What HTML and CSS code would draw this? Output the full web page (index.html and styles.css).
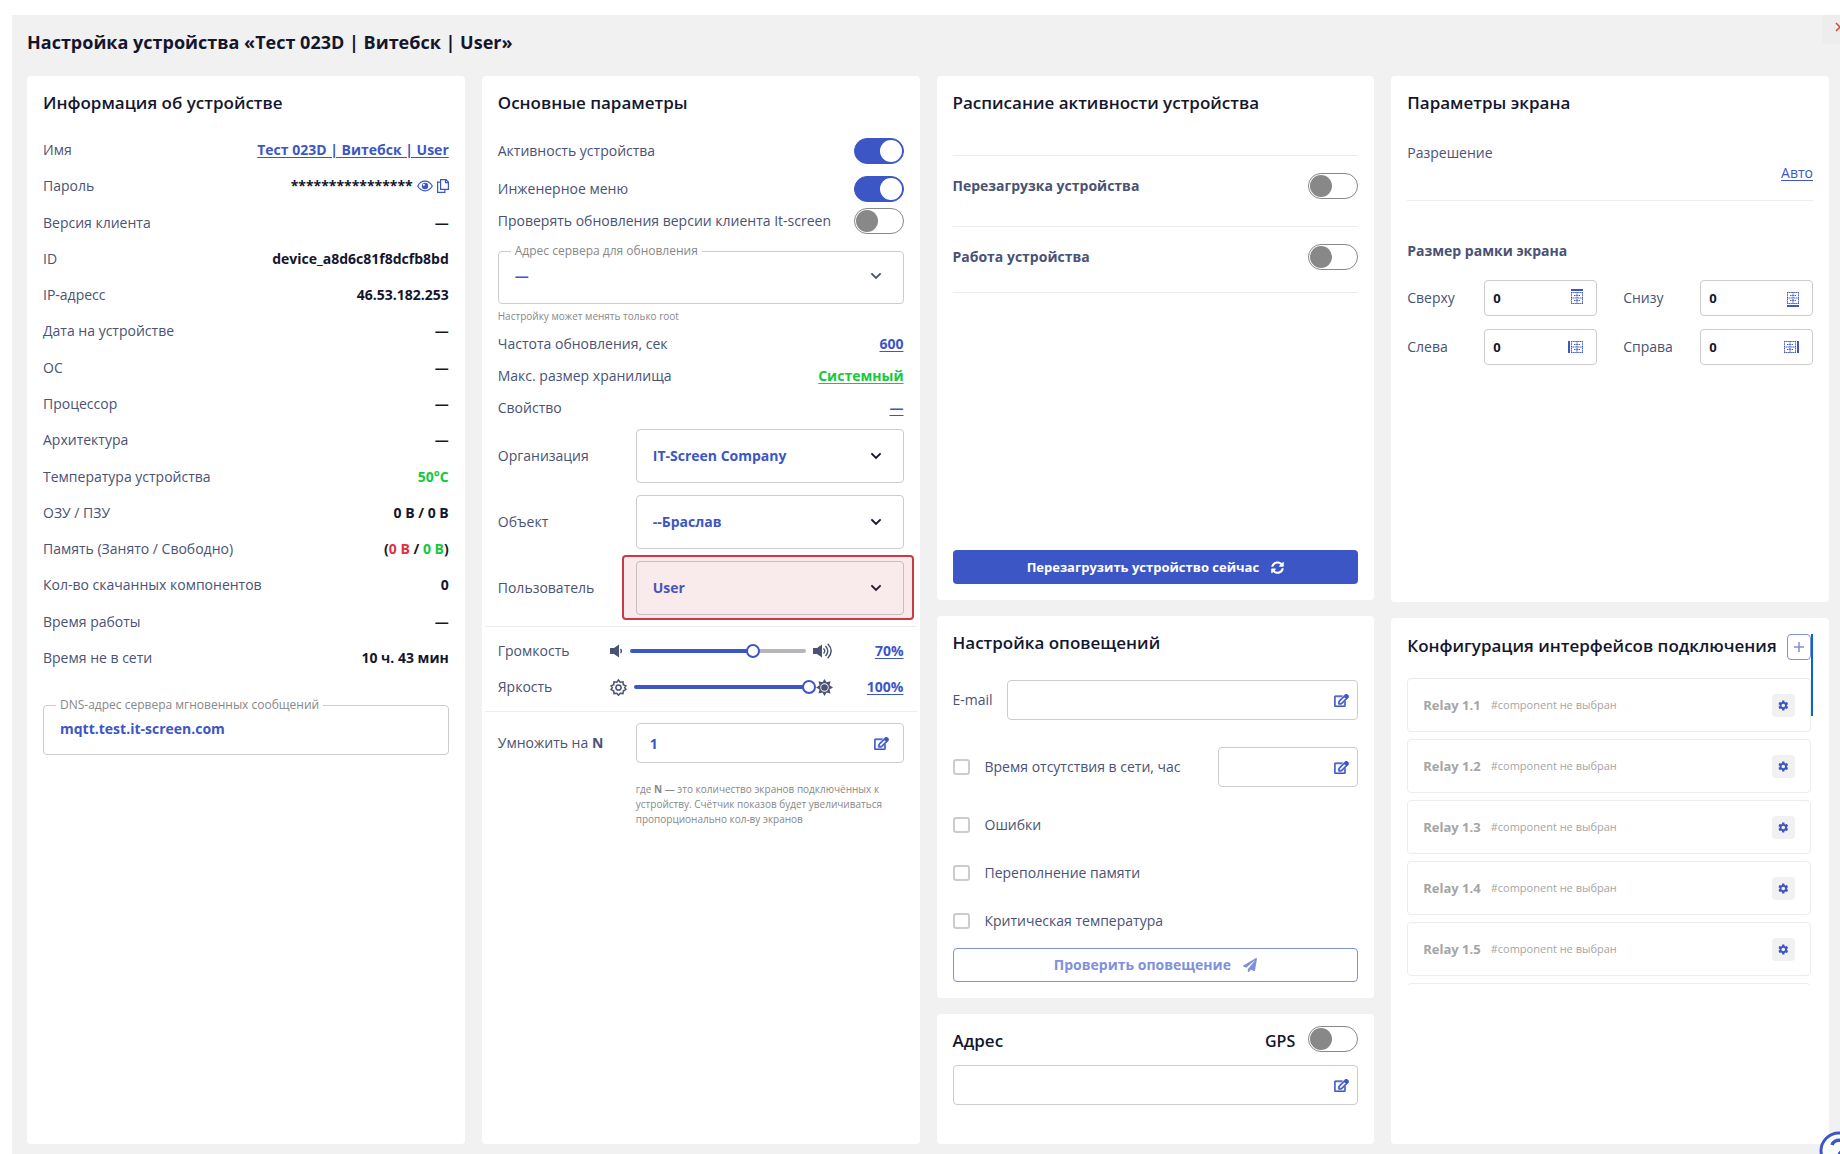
FILE: index.html
```html
<!DOCTYPE html>
<html lang="ru">
<head>
<meta charset="utf-8">
<title>Настройка устройства</title>
<link rel="stylesheet" href="styles.css">
</head>
<body>
<svg class="sprite" aria-hidden="true">
  <symbol id="i-edit" viewBox="0 0 576 512"><path stroke="currentColor" stroke-width="22" d="M402 320l32-32c5-5 14-1 14 6v170c0 26-22 48-48 48H48c-27 0-48-22-48-48V112c0-27 21-48 48-48h274c7 0 11 9 6 14l-32 32c-2 1-4 2-6 2H48v352h352V326c0-2 1-4 2-6zM558 143L296 406l-91 10c-26 3-48-19-45-45l10-91L433 18c23-23 60-23 83 0l42 42c23 23 23 60 0 83zM460 174l-58-58-186 186-8 66 66-8z"/></symbol>
  <symbol id="i-chev" viewBox="0 0 12 12"><path d="M2 4l4 4 4-4" fill="none" stroke="currentColor" stroke-width="1.8" stroke-linecap="square"/></symbol>
  <symbol id="i-gear" viewBox="0 0 24 24"><path fill-rule="evenodd" d="M19.4 13c.1-.3.1-.7.1-1s0-.7-.1-1l2.4-1.800c.2-.2.3-.5.1-.7l-2.200-4c-.1-.3-.4-.3-.6-.2L16.200 5.400c-.6-.4-1.200-.8-1.900-1L13.900 1.400c0-.2-.2-.4-.5-.4h-3.800c-.3 0-.5.2-.5.400l-.4 3c-.7.300-1.300.6-1.900 1L3.900 4.300c-.2-.1-.5 0-.6.2l-2.200 4c-.1.200-.1.500.1.700L3.700 11c-.1.300-.1.700-.1 1s0 .7.100 1l-2.500 1.800c-.2.200-.2.500-.1.700l2.200 4c.1.300.4.300.6.200l2.900-1.100c.6.400 1.200.8 1.900 1l.4 3c0 .2.200.4.500.4h3.800c.3 0 .5-.2.5-.4l.4-3c.7-.3 1.300-.6 1.900-1l2.900 1.100c.2.100.5 0 .6-.2l2.200-4c.1-.2.1-.5-.1-.7zM11.500 16a4 4 0 110-8 4 4 0 010 8z"/></symbol>
  <symbol id="i-grid" viewBox="0 0 12 12"><path d="M0 .5h12M0 6h12M0 11.500h12" fill="none" stroke="currentColor" stroke-dasharray="1.500 .6"/><path d="M.5 0v12M6 0v12M11.500 0v12M3 3.500h6M3 8.500h6" fill="none" stroke="currentColor" stroke-dasharray="1.500 .8"/></symbol>
</svg>
<main class="panel">
  <button class="close" type="button" aria-label="Закрыть"><svg width="10" height="10" viewBox="0 0 10 10"><path d="M1 1l8 8M9 1L1 9" fill="none" stroke="currentColor" stroke-width="1.500"/></svg></button>
  <h1 class="title">Настройка устройства «Тест 023D | Витебск | User»</h1>
  <div class="columns">

    <div class="column">
      <section class="card">
        <h2 class="heading">Информация об устройстве</h2>
        <dl class="info">
          <div class="pair"><dt>Имя</dt><dd><a class="link" href="#">Тест 023D | Витебск | User</a></dd></div>
          <div class="pair"><dt>Пароль</dt><dd class="secret">****************
            <svg class="blue" width="16" height="12" viewBox="0 0 16 12"><path d="M.7 6C2.500 2.700 5 1.200 8 1.200S13.500 2.700 15.300 6C13.500 9.300 11 10.800 8 10.800S2.500 9.300.7 6z" fill="none" stroke="currentColor" stroke-width="1.200"/><circle cx="8" cy="6" r="3.200"/><circle cx="6.800" cy="4.800" r="1.100" fill="#fff"/></svg>
            <svg class="blue" width="12" height="14" viewBox="0 0 12 14"><path d="M3.600.6H9L11.400 3v7.400H3.600zM8.500.6v3h2.900M3.600 3.100H.6v10.300h7.300v-3" fill="none" stroke="currentColor" stroke-width="1.200"/></svg></dd></div>
          <div class="pair"><dt>Версия клиента</dt><dd>—</dd></div>
          <div class="pair"><dt>ID</dt><dd>device_a8d6c81f8dcfb8bd</dd></div>
          <div class="pair"><dt>IP-адресс</dt><dd>46.53.182.253</dd></div>
          <div class="pair"><dt>Дата на устройстве</dt><dd>—</dd></div>
          <div class="pair"><dt>ОС</dt><dd>—</dd></div>
          <div class="pair"><dt>Процессор</dt><dd>—</dd></div>
          <div class="pair"><dt>Архитектура</dt><dd>—</dd></div>
          <div class="pair"><dt>Температура устройства</dt><dd class="green">50°C</dd></div>
          <div class="pair"><dt>ОЗУ / ПЗУ</dt><dd>0 B / 0 B</dd></div>
          <div class="pair"><dt>Память (Занято / Свободно)</dt><dd>(<span class="red">0 B</span> / <span class="green">0 B</span>)</dd></div>
          <div class="pair"><dt>Кол-во скачанных компонентов</dt><dd>0</dd></div>
          <div class="pair"><dt>Время работы</dt><dd>—</dd></div>
          <div class="pair"><dt>Время не в сети</dt><dd>10 ч. 43 мин</dd></div>
        </dl>
        <fieldset class="outlined dns">
          <legend>DNS-адрес сервера мгновенных сообщений</legend>
          <input class="bare" type="text" value="mqtt.test.it-screen.com" aria-label="DNS-адрес сервера мгновенных сообщений">
        </fieldset>
      </section>
    </div>

    <div class="column">
      <section class="card">
        <h2 class="heading">Основные параметры</h2>
        <div class="switches">
          <label class="pair"><span>Активность устройства</span><input class="toggle" type="checkbox" checked></label>
          <label class="pair"><span>Инженерное меню</span><input class="toggle" type="checkbox" checked></label>
        </div>
        <label class="pair updates"><span>Проверять обновления версии клиента It-screen</span><input class="toggle" type="checkbox"></label>
        <fieldset class="outlined server">
          <legend>Адрес сервера для обновления</legend>
          <div class="pick bareless"><select aria-label="Адрес сервера для обновления"><option>—</option></select><svg class="chev soft" width="12" height="12"><use href="#i-chev"/></svg></div>
        </fieldset>
        <p class="hint">Настройку может менять только root</p>
        <dl class="facts">
          <div class="pair"><dt>Частота обновления, сек</dt><dd><a class="link" href="#">600</a></dd></div>
          <div class="pair"><dt>Макс. размер хранилища</dt><dd><a class="link green" href="#">Системный</a></dd></div>
          <div class="pair"><dt>Свойство</dt><dd><a class="link" href="#">—</a></dd></div>
        </dl>
        <div class="form">
          <label class="label" for="org">Организация</label>
          <div class="pick boxed"><select id="org"><option>IT-Screen Company</option></select><svg class="chev" width="12" height="12"><use href="#i-chev"/></svg></div>
          <label class="label" for="obj">Объект</label>
          <div class="pick boxed"><select id="obj"><option>--Браслав</option></select><svg class="chev" width="12" height="12"><use href="#i-chev"/></svg></div>
          <label class="label" for="usr">Пользователь</label>
          <div class="pick boxed marked"><select id="usr"><option>User</option></select><svg class="chev" width="12" height="12"><use href="#i-chev"/></svg></div>
        </div>
        <div class="levels">
          <div class="level">
            <label class="label" for="vol">Громкость</label>
            <svg width="13" height="14" viewBox="0 0 13 14"><path d="M0 4h4l5-3.500v13L4 10H0z"/><path d="M10.500 5q2 2 0 4" fill="none" stroke="currentColor" stroke-width="1.400"/></svg>
            <div class="slider" style="--value:70%"><input id="vol" type="range" value="70"></div>
            <svg width="20" height="16" viewBox="0 0 20 16"><path d="M0 5h4l5-3.500v13L4 11H0z"/><path d="M10.500 5.500q2.500 2.500 0 5M12.500 3q4.500 5 0 10M14.700.8q7 7.200 0 14.400" fill="none" stroke="currentColor" stroke-width="1.400"/></svg>
            <a class="link" href="#">70%</a>
          </div>
          <div class="level">
            <label class="label" for="bri">Яркость</label>
            <svg width="17" height="17" viewBox="0 0 17 17"><path d="M8.500 1l1.700 2.300 2.800-.5.300 2.900 2.600 1.100L14.700 8.500l1.200 2-2.600 1.500-.3 2.600-2.800-.4-1.700 2-1.700-2-2.800.4-.3-2.600-2.600-1.500 1.200-2-1.200-1.700 2.600-1.100.3-2.900 2.800.5z" fill="none" stroke="currentColor" stroke-width="1.500"/><circle cx="8.500" cy="8.500" r="2.600" fill="none" stroke="currentColor" stroke-width="1.500"/></svg>
            <div class="slider" style="--value:100%"><input id="bri" type="range" value="100"></div>
            <svg width="17" height="17" viewBox="0 0 17 17"><path fill-rule="evenodd" d="M8.500 0l2 3.300 4-1-1 4L17 8.500l-3.500 2 1 4-4-.9-2 3.400-2-3.400-4 .9 1-4L0 8.500l3.500-2.200-1-4 4 1zM8.500 4.300a4.200 4.200 0 100 8.400 4.200 4.200 0 000-8.400z"/><circle cx="8.500" cy="8.500" r="3.300"/></svg>
            <a class="link" href="#">100%</a>
          </div>
        </div>
        <div class="form multiply">
          <label class="label" for="mul">Умножить на <b>N</b></label>
          <div class="field"><input id="mul" type="text" value="1"><svg class="edit" width="15" height="13"><use href="#i-edit"/></svg></div>
          <p class="hint note">где <b>N</b> — это количество экранов подключённых к устройству. Счётчик показов будет увеличиваться пропорционально кол-ву экранов</p>
        </div>
      </section>
    </div>

    <div class="column">
      <section class="card schedule">
        <h2 class="heading">Расписание активности устройства</h2>
        <div class="plan">
          <label class="pair strong"><span>Перезагрузка устройства</span><input class="toggle" type="checkbox"></label>
          <label class="pair strong"><span>Работа устройства</span><input class="toggle" type="checkbox"></label>
        </div>
        <button class="button solid" type="button">Перезагрузить устройство сейчас
          <svg width="13" height="13" viewBox="0 0 512 512"><path d="M371 142c-32-31-72-47-115-47-78 0-145 53-164 127-1 5-6 9-11 9H24c-8 0-14-7-12-14C33 103 134 16 256 16c66 0 127 26 171 69l36-36c15-15 41-4 41 17v134c0 13-11 24-24 24H346c-21 0-32-26-17-41zM32 296h134c21 0 32 26 17 41l-42 41c32 31 72 47 115 47 78 0 145-53 164-127 1-5 6-9 11-9h57c8 0 14 7 12 14-21 114-122 201-244 201-66 0-127-26-171-69l-36 36c-15 15-41 4-41-17V320c0-13 11-24 24-24z"/></svg></button>
      </section>
      <section class="card alerts">
        <h2 class="heading">Настройка оповещений</h2>
        <div class="mail"><label class="label" for="mail">E-mail</label>
          <div class="field"><input id="mail" type="text"><svg class="edit" width="15" height="13"><use href="#i-edit"/></svg></div></div>
        <div class="absence"><label class="check"><input class="tick" type="checkbox">Время отсутствия в сети, час</label>
          <div class="field hours"><input type="text" aria-label="Время отсутствия в сети, час"><svg class="edit" width="15" height="13"><use href="#i-edit"/></svg></div></div>
        <div class="checks">
          <label class="check"><input class="tick" type="checkbox">Ошибки</label>
          <label class="check"><input class="tick" type="checkbox">Переполнение памяти</label>
          <label class="check"><input class="tick" type="checkbox">Критическая температура</label>
        </div>
        <button class="button ghost" type="button">Проверить оповещение
          <svg width="14" height="14" viewBox="0 0 512 512"><path d="M476 3L12 271c-18 10-16 35 2 43l106 44L408 105c6-5 13 3 9 9L176 407v81c0 23 28 33 42 15l64-77 124 52c15 6 31-3 33-19l72-432c3-20-18-34-35-24z"/></svg></button>
      </section>
      <section class="card address">
        <div class="addresshead"><h2 class="heading">Адрес</h2><label class="gps">GPS<input class="toggle" type="checkbox"></label></div>
        <div class="field"><input type="text" aria-label="Адрес"><svg class="edit" width="15" height="13"><use href="#i-edit"/></svg></div>
      </section>
    </div>

    <div class="column">
      <section class="card half">
        <h2 class="heading">Параметры экрана</h2>
        <div class="resolution"><span>Разрешение</span><a class="link plain" href="#">Авто</a></div>
        <h3 class="subheading">Размер рамки экрана</h3>
        <div class="frame">
          <label for="ft">Сверху</label><div class="side"><input id="ft" type="text" value="0"><svg class="edge" width="18" height="18" viewBox="0 0 18 18"><path d="M3 0h12v2H3z"/><use href="#i-grid" x="3" y="3" width="12" height="12"/></svg></div>
          <label class="second" for="fb">Снизу</label><div class="side"><input id="fb" type="text" value="0"><svg class="edge" width="18" height="18" viewBox="0 0 18 18"><path d="M3 16h12v2H3z"/><use href="#i-grid" x="3" y="3" width="12" height="12"/></svg></div>
          <label for="fl">Слева</label><div class="side"><input id="fl" type="text" value="0"><svg class="edge" width="18" height="18" viewBox="0 0 18 18"><path d="M0 3h2v12H0z"/><use href="#i-grid" x="3" y="3" width="12" height="12"/></svg></div>
          <label class="second" for="fr">Справа</label><div class="side"><input id="fr" type="text" value="0"><svg class="edge" width="18" height="18" viewBox="0 0 18 18"><path d="M13 3h2v12h-2z"/><use href="#i-grid" x="0" y="3" width="12" height="12"/></svg></div>
        </div>
      </section>
      <section class="card half">
        <div class="scroller">
          <div class="relayhead"><h2 class="heading">Конфигурация интерфейсов подключения</h2><button class="add" type="button" aria-label="Добавить"><svg width="12" height="12" viewBox="0 0 12 12"><path d="M6 1v10M1 6h10" fill="none" stroke="currentColor" stroke-width="1.500"/></svg></button></div>
          <ul class="relays">
            <li class="relay"><b>Relay 1.1</b><span>#component не выбран</span><button class="cog" type="button" aria-label="Настроить"><svg width="11" height="11"><use href="#i-gear"/></svg></button></li>
            <li class="relay"><b>Relay 1.2</b><span>#component не выбран</span><button class="cog" type="button" aria-label="Настроить"><svg width="11" height="11"><use href="#i-gear"/></svg></button></li>
            <li class="relay"><b>Relay 1.3</b><span>#component не выбран</span><button class="cog" type="button" aria-label="Настроить"><svg width="11" height="11"><use href="#i-gear"/></svg></button></li>
            <li class="relay"><b>Relay 1.4</b><span>#component не выбран</span><button class="cog" type="button" aria-label="Настроить"><svg width="11" height="11"><use href="#i-gear"/></svg></button></li>
            <li class="relay"><b>Relay 1.5</b><span>#component не выбран</span><button class="cog" type="button" aria-label="Настроить"><svg width="11" height="11"><use href="#i-gear"/></svg></button></li>
            <li class="relay"></li>
          </ul>
        </div>
      </section>
    </div>
  </div>
</main>
<button class="help" type="button" aria-label="Помощь"><svg width="40" height="40" viewBox="0 0 40 40"><circle cx="20" cy="20" r="18" fill="#fff" stroke="currentColor" stroke-width="3"/><path d="M13 14c2-7 14-6 14 1 0 5-7 5-7 10" fill="none" stroke="currentColor" stroke-width="3.500"/><circle cx="20" cy="30" r="2"/></svg></button>
</body>
</html>
```
FILE: styles.css
```css
* { box-sizing: border-box; }
:root {
  --blue: #3d56c6;
  --ink: #14162e;
  --label: #4a5275;
  --line: #ccc;
  --rule: #ececec;
  --grey: #888;
}
body {
  margin: 0;
  background: #fff;
  color: var(--label);
  font: 14px/20px "Open Sans", "Noto Sans", sans-serif;
  overflow: hidden;
}
h1, h2, h3, p, dl, dd, ul { margin: 0; padding: 0; }
svg { display: block; flex: none; fill: currentColor; }
button, input, select { font: inherit; color: inherit; margin: 0; }
button { padding: 0; border: 0; background: none; display: flex; align-items: center; justify-content: center; }
.sprite { position: absolute; width: 0; height: 0; }

.panel {
  position: relative;
  display: flex;
  flex-direction: column;
  min-height: calc(100vh - 15px);
  margin: 15px 0 0 12px;
  padding: 15px 11px 10px 15px;
  background: #f1f1f1;
}
.title { color: var(--ink); font-size: 18px; line-height: 24px; font-weight: 700; margin-bottom: 22px; }
.close { position: absolute; top: 0; right: -18px; width: 36px; height: 29px; background: #ededed; color: #d8432b; padding-bottom: 6px; }
.columns { flex: 1; display: grid; grid-template-columns: repeat(4, minmax(0, 1fr)); gap: 17px; }
.column { display: flex; flex-direction: column; gap: 16px; }
.card { background: #fff; border-radius: 4px; padding: 16px; }
.column > .card:only-child, .schedule, .half { flex: 1; }
.heading { color: var(--ink); font-size: 17px; line-height: 22px; font-weight: 600; padding-bottom: 2px; }
.subheading { font-size: 14px; line-height: 20px; font-weight: 700; }

.pair { display: flex; align-items: center; justify-content: space-between; }
dd { color: var(--ink); font-weight: 700; }
.link { color: var(--blue); font-weight: 700; text-decoration: underline; text-underline-offset: 2px; }
.link.plain { font-weight: 400; }
.green, .link.green { color: #14c93c; }
.red { color: #e2313f; }
.blue { color: var(--blue); }
.strong { font-weight: 700; }

.info { display: grid; grid-auto-rows: 1fr; min-height: 544px; margin-top: 16px; }
.secret { display: flex; align-items: center; gap: 4px; }

.outlined { border: 1px solid var(--line); border-radius: 4px; margin: 0; padding: 0 16px; min-width: 0; }
.outlined legend { font-size: 12px; line-height: 14px; color: var(--grey); padding: 0 4px; margin-left: -4px; }
.dns { margin-top: 22px; height: 57px; }
.bare { width: 100%; border: 0; padding: 0; height: 32px; background: none; color: var(--blue); font-weight: 700; }

.toggle {
  appearance: none; flex: none; width: 50px; height: 26px; border: 1px solid var(--grey); border-radius: 13px;
  padding: 1px; background: #fff; display: flex;
}
.toggle::before { content: ""; width: 22px; height: 22px; border-radius: 50%; background: var(--grey); }
.toggle:checked { background: var(--blue); border-color: var(--blue); justify-content: flex-end; }
.toggle:checked::before { background: #fff; }
.switches { display: grid; gap: 12px; margin-top: 22px; }
.updates { margin-top: 6px; }

.server { margin-top: 10px; height: 60px; }
.hint { font-size: 10px; line-height: 15px; color: var(--grey); }
.server + .hint { margin-top: 5px; }
.facts { display: grid; gap: 12px; margin-top: 10px; }
.pick { position: relative; display: flex; align-items: center; }
.pick select { appearance: none; width: 100%; height: 36px; border: 0; padding: 0; background: none; color: var(--blue); font-weight: 700; }
.pick.boxed select { height: 54px; border: 1px solid var(--line); border-radius: 4px; padding: 0 16px; }
.chev { position: absolute; right: 22px; color: var(--ink); pointer-events: none; }
.bareless .chev { right: 5px; }
.chev.soft { color: var(--label); }
.marked::after {
  content: ""; position: absolute; inset: -6px -10px -5px -14px; border: 2px solid #c93a45; border-radius: 4px;
  background: rgba(201, 58, 69, .1); pointer-events: none;
}
.form { display: grid; grid-template-columns: 138px 1fr; align-items: center; row-gap: 12px; margin-top: 11px; }
.levels { display: grid; gap: 16px; margin: 11px -13px 0; padding: 14px 13px; border: solid var(--rule); border-width: 1px 0; }
.level { display: flex; align-items: center; }
.level .label { width: 112px; }
.level .link { width: 71px; text-align: right; }
.slider { position: relative; flex: 1; min-width: 0; margin: 0 7px; display: flex; align-items: center; }
.slider::before {
  content: ""; position: absolute; left: 0; right: 0; height: 4px; border-radius: 2px;
  background: linear-gradient(to right, var(--blue) var(--value), #b4b6bb var(--value));
}
.slider input { appearance: none; position: relative; flex: 1; min-width: 0; height: 14px; margin: 0 -7px; background: none; }
.slider input::-webkit-slider-thumb { appearance: none; width: 14px; height: 14px; border: 2px solid var(--blue); border-radius: 50%; background: #fff; }
.multiply { row-gap: 19px; }
.note { grid-column: 2; }
.field { position: relative; display: flex; align-items: center; }
.field input { width: 100%; height: 40px; border: 1px solid var(--line); border-radius: 4px; padding: 0 40px 0 13px; background: #fff; color: var(--blue); font-weight: 700; }
.edit { position: absolute; right: 9px; color: var(--blue); }
.multiply .edit { right: 15px; }

.schedule { display: flex; flex-direction: column; }
.plan { margin-top: 39px; border-top: 1px solid var(--rule); }
.plan .pair { padding: 17px 0 27px; border-bottom: 1px solid var(--rule); }
.plan .pair + .pair { padding-bottom: 22px; }
.button { width: 100%; height: 34px; border-radius: 4px; gap: 12px; font-weight: 700; font-size: 13px; }
.solid { margin-top: auto; background: var(--blue); color: #fff; }
.ghost { border: 1px solid #8090dc; color: #8090dc; font-size: 14px; margin-top: 17px; }
.mail { display: flex; align-items: center; gap: 14px; margin-top: 24px; }
.mail .field { flex: 1; }
.absence { display: flex; align-items: center; justify-content: space-between; margin-top: 27px; }
.hours { width: 140px; }
.checks { display: grid; gap: 28px; margin-top: 28px; }
.check { display: flex; align-items: center; gap: 15px; }
.tick { appearance: none; width: 17px; height: 16px; border: 2px solid var(--line); border-radius: 3px; }
.address { padding-top: 12px; padding-bottom: 39px; }
.addresshead { display: flex; align-items: flex-end; justify-content: space-between; margin-bottom: 13px; }
.addresshead .heading { padding-bottom: 0; }
.gps { display: flex; align-items: flex-end; gap: 13px; color: var(--ink); font-size: 16px; line-height: 22px; font-weight: 600; }

.resolution { display: flex; flex-direction: column; margin-top: 27px; padding-bottom: 17px; border-bottom: 1px solid var(--rule); }
.resolution .link { align-self: flex-end; }
.subheading { margin-top: 40px; }
.frame { display: grid; grid-template-columns: 77px 1fr 103px 1fr; row-gap: 13px; align-items: center; margin-top: 19px; }
.second { padding-left: 26px; }
.side { position: relative; display: flex; align-items: center; min-width: 0; }
.side input { width: 100%; height: 36px; border: 1px solid var(--line); border-radius: 4px; padding: 0 8px; color: var(--ink); font-size: 13px; font-weight: 700; }
.edge { position: absolute; right: 11px; color: var(--blue); }

.scroller { position: relative; height: 351px; overflow: hidden; padding-right: 2px; }
.scroller::after { content: ""; position: absolute; top: 0; right: 0; width: 2px; height: 82px; background: #0a66c8; }
.relayhead { display: flex; justify-content: space-between; align-items: flex-start; margin-bottom: 18px; }
.relayhead .heading { line-height: 24px; padding-bottom: 0; }
.add { width: 24px; height: 26px; border: 1px solid #8090dc; border-radius: 4px; color: #8090dc; }
.relays { list-style: none; display: grid; gap: 7px; }
.relay { display: flex; align-items: center; gap: 10px; height: 54px; border: 1px solid var(--rule); border-radius: 4px; padding: 0 15px; color: #a5a5a5; font-size: 11px; }
.relay b { font-size: 13px; }
.cog { width: 23px; height: 23px; margin-left: auto; background: #f1f1f1; border-radius: 4px; color: var(--blue); }
.help { position: fixed; right: -19px; bottom: -17px; color: var(--blue); }
```
